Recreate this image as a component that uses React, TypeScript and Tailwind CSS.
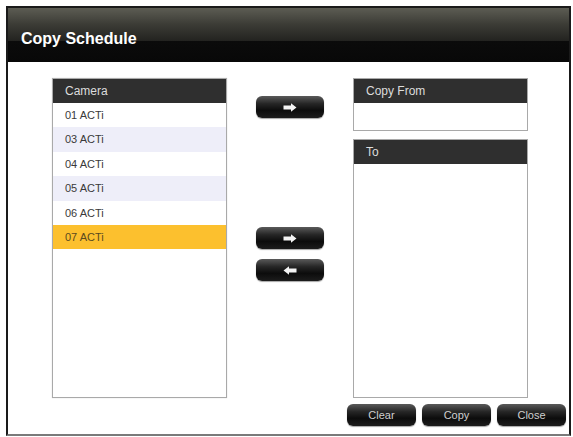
import React from 'react';

const cameras = [
  { id: '01', name: '01 ACTi' },
  { id: '03', name: '03 ACTi' },
  { id: '04', name: '04 ACTi' },
  { id: '05', name: '05 ACTi' },
  { id: '06', name: '06 ACTi' },
  { id: '07', name: '07 ACTi' },
];

function Arrow({ dir }: { dir: 'right' | 'left' }) {
  return (
    <svg width="14" height="9" viewBox="0 0 14 9" className={dir === 'left' ? 'rotate-180' : ''}>
      <path d="M0.5 2.6 H8 V0.3 L13.5 4.5 L8 8.7 V6.4 H0.5 Z" fill="#f4f4f4" />
    </svg>
  );
}

function DarkButton({ children, className = '' }: { children: React.ReactNode; className?: string }) {
  return (
    <button
      className={`flex h-[22px] items-center justify-center rounded-[6px] bg-[linear-gradient(#5a5a5a_0%,#262626_35%,#0c0c0c_65%,#1c1c1c_100%)] text-[11px] text-[#cfcfcf] shadow-[0_1px_1px_rgba(0,0,0,0.35)] ${className}`}
    >
      {children}
    </button>
  );
}

function PanelHeader({ title }: { title: string }) {
  return (
    <div className="flex h-6 items-center bg-[#2f2f2f] pl-[12px] text-[12px] text-[#dcdcdc]">{title}</div>
  );
}

export default function App() {
  const selected = '07';

  return (
    <div className="h-[437px] w-[573px] bg-white pl-[6px] pt-[6px] font-['Liberation_Sans',Arial,sans-serif]">
      <div className="flex h-[430px] w-[565px] flex-col border-x-2 border-t-2 border-b-2 border-x-[#1a1a1a] border-t-[#1a1a1a] border-b-[#7a7a7a] bg-white">
        {/* title bar */}
        <div className="h-[54px] bg-[linear-gradient(#5c5c53_0%,#3c3c36_30%,#22221f_62%,#0b0b0b_62%,#080808_100%)] pl-[13px] pt-[21px]">
          <h1 className="text-[16px] font-bold leading-[19px] text-white">Copy Schedule</h1>
        </div>

        <div className="flex flex-1 flex-col pl-[44px] pt-[16px]">
          <div className="flex h-[320px] gap-[29px]">
            {/* camera list */}
            <div className="w-[175px] border border-[#a9a9a9] bg-white shadow-[0_0_1px_rgba(0,0,0,0.2)]">
              <PanelHeader title="Camera" />
              {cameras.map((cam, i) => (
                <div
                  key={cam.id}
                  className={`flex h-[24.4px] items-center pl-[12px] text-[11px] ${
                    cam.id === selected
                      ? 'bg-[#fcc02e] text-[#5a4a20]'
                      : i % 2 === 1
                        ? 'bg-[#eeeef9] text-[#3a3a3a]'
                        : 'bg-white text-[#3a3a3a]'
                  }`}
                >
                  {cam.name}
                </div>
              ))}
            </div>

            {/* move buttons */}
            <div className="flex w-[68px] flex-col">
              <DarkButton className="mt-[18px] w-[68px]">
                <Arrow dir="right" />
              </DarkButton>
              <DarkButton className="mt-[109px] w-[68px]">
                <Arrow dir="right" />
              </DarkButton>
              <DarkButton className="mt-[10px] w-[68px]">
                <Arrow dir="left" />
              </DarkButton>
            </div>

            {/* source / target */}
            <div className="flex w-[175px] flex-col gap-[8px]">
              <div className="h-[53px] border border-[#a9a9a9] bg-white">
                <PanelHeader title="Copy From" />
              </div>
              <div className="flex-1 border border-[#a9a9a9] bg-white">
                <PanelHeader title="To" />
              </div>
            </div>
          </div>

          <div className="mt-[6px] flex justify-end gap-[6px] pr-[3px]">
            <DarkButton className="w-[69px]">Clear</DarkButton>
            <DarkButton className="w-[69px]">Copy</DarkButton>
            <DarkButton className="w-[69px]">Close</DarkButton>
          </div>
        </div>
      </div>
    </div>
  );
}
